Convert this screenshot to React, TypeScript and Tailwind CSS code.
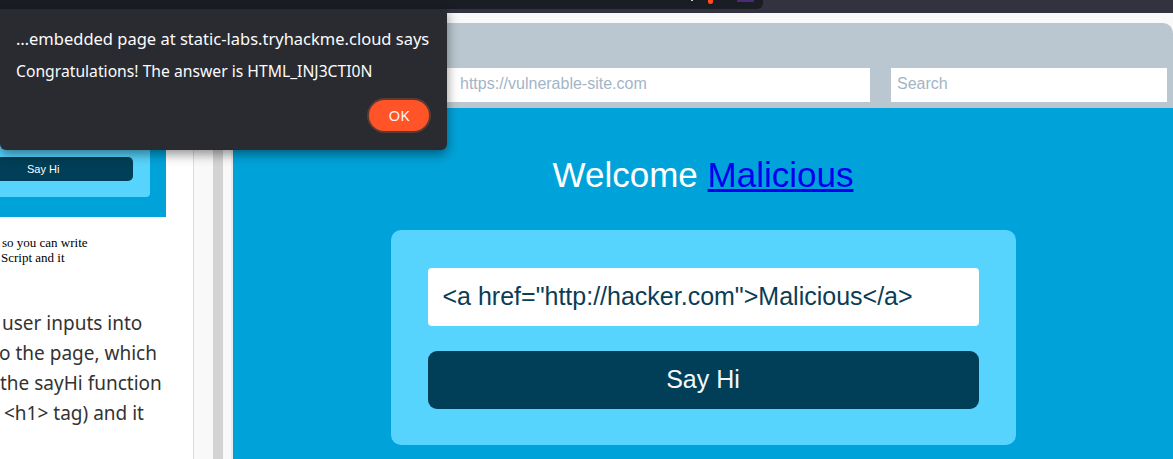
export default function App() {
  const ubuntu = { fontFamily: '"Noto Sans", "Open Sans", sans-serif' };
  const arial = { fontFamily: '"Liberation Sans", Arial, sans-serif' };
  const serif = { fontFamily: '"Liberation Serif", "Times New Roman", serif' };
  return (
    <div className="relative w-[1173px] h-[459px] overflow-hidden bg-[#32333f]">
      {/* top toolbar strip */}
      <div className="h-[13px] flex items-start">
        <div className="w-[763px] h-[9px] bg-[#1b1d25] rounded-br-[6px] flex items-start pl-[691px]">
          <div className="w-[2px] h-[1px] bg-[#d0d0d0]" />
          <div className="ml-[15px] w-[5px] h-[4px] rounded-b-full bg-[#ff4f1f]" />
          <div className="ml-[24px] w-[17px] h-[2px] bg-[#4b2a7a]" />
        </div>
      </div>

      <div className="flex h-[446px]">
        {/* left panel */}
        <div className="w-[194px] shrink-0 bg-white border-r border-[#dcdcdc] overflow-hidden">
          <div className="h-[87px]" />
          <div className="w-[166px] h-[117px] bg-[#00a3d9]">
            <div className="w-[150px] h-[97px] bg-[#57d4fe] rounded-br-[4px] pt-[57px]">
              <div
                className="w-[133px] h-[24px] bg-[#003f57] rounded-r-[5px] flex items-center pl-[27px] text-[11px] text-white"
                style={arial}
              >
                Say Hi
              </div>
            </div>
          </div>
          <div className="mt-[18px] pl-[2px] text-[13px] leading-[15px] text-black whitespace-nowrap" style={serif}>
            <div>so you can write</div>
            <div className="-ml-[1px]">Script and it</div>
          </div>
          <div className="mt-[43px] text-[19px] leading-[30px] text-[#333333] whitespace-nowrap" style={ubuntu}>
            <div className="pl-[2px]">user inputs into</div>
            <div className="-ml-[1px]">o the page, which</div>
            <div>the sayHi function</div>
            <div className="pl-[4px]">&lt;h1&gt; tag) and it</div>
          </div>
        </div>

        {/* scrollbar / gutter strip */}
        <div className="flex shrink-0 h-full">
          <div className="w-[19px] bg-[#f9f9f9]" />
          <div className="w-[10px] bg-[#d3d3d3]" />
          <div className="w-[8px] bg-[#f9f9f9]" />
          <div className="w-[2px] bg-[#ececec]" />
        </div>

        {/* right panel */}
        <div className="flex-1 flex flex-col bg-[#f9f9f9] pt-[10px]">
          <div className="h-[85px] shrink-0 bg-[#bbc7d0] rounded-tr-[10px] flex items-start pt-[45px] pl-[214px] gap-[21px]" style={arial}>
            <div className="w-[423px] h-[34px] bg-white pl-[13px] text-[16px] leading-[32px] text-[#a2b5c6]">
              https://vulnerable-site.com
            </div>
            <div className="w-[276px] h-[34px] bg-white pl-[6px] text-[16px] leading-[32px] text-[#a2b5c6]">
              Search
            </div>
          </div>
          <div className="flex-1 bg-[#00a3d9] flex flex-col items-center" style={arial}>
            <div className="mt-[47px] text-[35px] leading-[40px] text-white">
              Welcome <span className="text-[#0000ee] underline">Malicious</span>
            </div>
            <div className="mt-[35px] w-[625px] rounded-[10px] bg-[#57d4fe] px-[37px] pt-[38px] pb-[36px]">
              <div className="h-[58px] rounded-[4px] bg-white pl-[15px] flex items-center text-[25px] text-[#0b3d55]">
                &lt;a href="http://hacker.com"&gt;Malicious&lt;/a&gt;
              </div>
              <div className="mt-[25px] h-[58px] rounded-[9px] bg-[#003f57] flex items-center justify-center text-[25px] text-[#f2f8fc]">
                Say Hi
              </div>
            </div>
          </div>
        </div>
      </div>

      {/* alert dialog */}
      <div
        className="absolute left-0 top-[9px] w-[447px] h-[141px] bg-[#2a2b30] rounded-b-[6px] shadow-[0_4px_12px_rgba(0,0,0,0.45)] text-[#fbfbfe]"
        style={ubuntu}
      >
        <div className="pt-[18px] pl-[16px] text-[16.5px] leading-[23px] whitespace-nowrap">
          …embedded page at static-labs.tryhackme.cloud says
        </div>
        <div className="mt-[11px] pl-[16px] text-[15.7px] leading-[21px] whitespace-nowrap">
          Congratulations! The answer is HTML_INJ3CTI0N
        </div>
        <div className="mt-[18px] flex justify-end pr-[18px]">
          <div className="w-[60px] h-[31px] rounded-full bg-[#ff5328] shadow-[0_0_0_2px_#5e3a31] flex items-center justify-center text-[15px] text-[#fff4ef]">
            OK
          </div>
        </div>
      </div>
    </div>
  );
}
